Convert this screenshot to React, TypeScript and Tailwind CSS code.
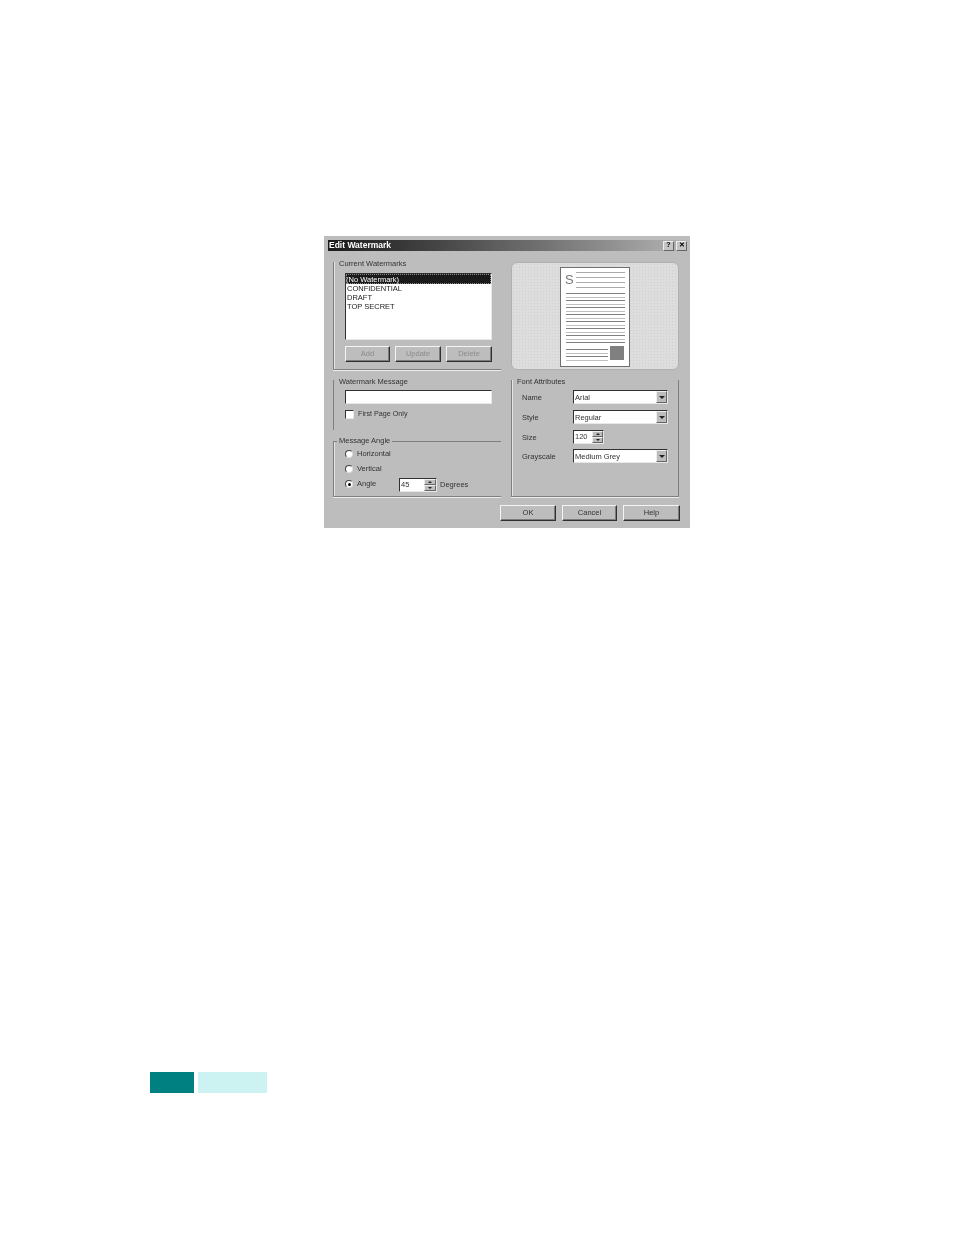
import React from 'react';

const raised =
  'border border-t-[#f4f4f4] border-l-[#f4f4f4] border-r-[#303030] border-b-[#303030] shadow-[inset_-1px_-1px_0_#7c7c7c]';
const raisedSmall = 'border border-t-[#eee] border-l-[#eee] border-r-[#666] border-b-[#666]';
const sunken =
  'border border-t-[#303030] border-l-[#303030] border-r-[#e8e8e8] border-b-[#e8e8e8] bg-white';

const Group: React.FC<{
  label: string;
  className: string;
  top?: boolean;
  right?: boolean;
  children?: React.ReactNode;
}> = ({ label, className, top, right, children }) => (
  <div
    className={`relative border-l border-b border-[#7f7f7f] shadow-[inset_1px_0_0_#e4e4e4,0_1px_0_#ececec] ${top ? 'border-t' : ''} ${right ? 'border-r' : ''} ${className}`}
  >
    <span
      className={`absolute left-[3px] bg-[#bdbdbd] px-[2px] text-[7.5px] leading-[10px] text-[#333] ${top ? 'top-[-6px]' : 'top-[-3px]'}`}
    >
      {label}
    </span>
    {children}
  </div>
);

const PushButton: React.FC<{ label: string; width: string; disabled?: boolean }> = ({
  label,
  width,
  disabled,
}) => (
  <div
    className={`flex items-center justify-center h-[16px] bg-[#bdbdbd] text-[7.5px] ${raised} ${width} ${disabled ? 'text-[#8c8c8c]' : 'text-[#333]'}`}
  >
    {label}
  </div>
);

const Radio: React.FC<{ label: string; checked?: boolean }> = ({ label, checked }) => (
  <div className="flex items-center h-[10px]">
    <div className="flex items-center justify-center w-[8px] h-[8px] rounded-full bg-white border border-t-[#444] border-l-[#444] border-r-[#ddd] border-b-[#ddd]">
      {checked && <div className="w-[3px] h-[3px] rounded-full bg-black" />}
    </div>
    <span className="ml-[4px] text-[7.5px] text-[#333]">{label}</span>
  </div>
);

const Spinner: React.FC<{ value: string; width: string; textWidth: string }> = ({
  value,
  width,
  textWidth,
}) => (
  <div className={`flex h-[14px] ${sunken} ${width}`}>
    <span className={`pl-[1px] text-[7.5px] leading-[12px] text-[#333] ${textWidth}`}>{value}</span>
    <div className="flex flex-col flex-1 bg-[#bdbdbd]">
      <div className={`flex-1 flex items-center justify-center ${raisedSmall}`}>
        <div className="w-0 h-0 border-x-[2px] border-x-transparent border-b-[2px] border-b-[#222]" />
      </div>
      <div className={`flex-1 flex items-center justify-center ${raisedSmall}`}>
        <div className="w-0 h-0 border-x-[2px] border-x-transparent border-t-[2px] border-t-[#222]" />
      </div>
    </div>
  </div>
);

const Field: React.FC<{ label: string; className?: string; children: React.ReactNode }> = ({
  label,
  className,
  children,
}) => (
  <div className={`flex items-center h-[14px] ${className ?? ''}`}>
    <span className="w-[51px] pt-[1px] text-[7.5px] text-[#333]">{label}</span>
    {children}
  </div>
);

const Select: React.FC<{ value: string }> = ({ value }) => (
  <div className={`flex items-center justify-between w-[95px] h-[14px] ${sunken}`}>
    <span className="pl-[1px] pt-[1px] text-[7.5px] text-[#333]">{value}</span>
    <div className={`flex items-center justify-center w-[11px] h-[12px] bg-[#bdbdbd] ${raisedSmall}`}>
      <div className="w-0 h-0 border-x-[3px] border-x-transparent border-t-[3px] border-t-[#222]" />
    </div>
  </div>
);

const DocPreview: React.FC = () => (
  <svg width="70" height="100" viewBox="0 0 70 100">
    <rect x="0.5" y="0.5" width="69" height="99" fill="#fff" stroke="#707070" />
    <text x="5" y="17" fontSize="13" fontFamily="Liberation Sans, sans-serif" fill="#777">
      S
    </text>
    {[5, 10, 15, 20].map((y) => (
      <line key={y} x1="16" x2="65" y1={y + 0.5} y2={y + 0.5} stroke="#aaa" />
    ))}
    {[26, 33, 40, 47, 54, 61, 68, 75].map((y) => (
      <line key={y} x1="6" x2="65" y1={y + 0.5} y2={y + 0.5} stroke="#808080" />
    ))}
    {[30, 37, 44, 51, 58, 65, 72].map((y) => (
      <line key={y} x1="6" x2="65" y1={y + 0.5} y2={y + 0.5} stroke="#c0c0c0" />
    ))}
    {[82, 86, 89, 93].map((y, i) => (
      <line key={y} x1="6" x2="48" y1={y + 0.5} y2={y + 0.5} stroke={i % 2 ? '#c0c0c0' : '#808080'} />
    ))}
    <rect x="50" y="79" width="14" height="14" fill="#808080" />
  </svg>
);

const App: React.FC = () => {
  return (
    <div className="h-[1235px] overflow-hidden bg-white font-['Liberation_Sans',Arial,sans-serif]">
      {/* Edit Watermark dialog */}
      <div className="ml-[324px] pt-[236px]">
        <div className="w-[366px] h-[292px] bg-[#bdbdbd] pt-[4px] pl-[4px] blur-[0.4px]">
          <div className="flex items-center justify-between w-[359px] h-[11px] bg-gradient-to-r from-[#1c1c1c] to-[#b4b4b4]">
            <span className="pl-[1px] text-[8.5px] font-bold text-white">Edit Watermark</span>
            <div className="flex gap-[2px]">
              <div className={`flex items-center justify-center w-[11px] h-[10px] bg-[#c4c4c4] text-[7px] font-bold text-black ${raisedSmall}`}>
                ?
              </div>
              <div className={`flex items-center justify-center w-[11px] h-[10px] bg-[#c4c4c4] text-[7px] font-bold text-black ${raisedSmall}`}>
                ✕
              </div>
            </div>
          </div>

          <div className="flex gap-[10px] pl-[5px] pt-[11px]">
            {/* left column */}
            <div className="flex flex-col w-[168px]">
              <Group label="Current Watermarks" className="h-[108px] pl-[11px] pt-[11px]">
                <div className={`w-[147px] h-[67px] text-[7.5px] leading-[9px] text-[#222] ${sunken}`}>
                  <div className="h-[10px] leading-[11px] bg-[#1a1a1a] text-white outline-1 -outline-offset-1 outline-dotted outline-[#888]">
                    (No Watermark)
                  </div>
                  <div className="pl-[1px]">CONFIDENTIAL</div>
                  <div className="pl-[1px]">DRAFT</div>
                  <div className="pl-[1px]">TOP SECRET</div>
                </div>
                <div className="flex gap-[5px] mt-[6px]">
                  <PushButton label="Add" width="w-[45px]" disabled />
                  <PushButton label="Update" width="w-[46px]" disabled />
                  <PushButton label="Delete" width="w-[46px]" disabled />
                </div>
              </Group>

              <Group label="Watermark Message" className="mt-[10px] h-[50px] pl-[11px] pt-[10px] !border-b-0 !shadow-none">
                <div className={`w-[147px] h-[14px] ${sunken}`} />
                <div className="flex items-center mt-[5px]">
                  <div className="w-[9px] h-[9px] bg-white border border-t-[#303030] border-l-[#303030] border-r-[#e8e8e8] border-b-[#e8e8e8]" />
                  <span className="ml-[4px] text-[7.2px] text-[#333]">First Page Only</span>
                </div>
              </Group>

              <Group label="Message Angle" top className="mt-[11px] h-[56px] pl-[11px] pt-[7px]">
                <div className="flex flex-col gap-[5px]">
                  <Radio label="Horizontal" />
                  <Radio label="Vertical" />
                  <div className="flex items-center h-[10px]">
                    <div className="w-[54px]">
                      <Radio label="Angle" checked />
                    </div>
                    <div className="mt-[2px] flex items-center">
                      <Spinner value="45" width="w-[38px]" textWidth="w-[24px]" />
                      <span className="ml-[3px] text-[7.5px] text-[#333]">Degrees</span>
                    </div>
                  </div>
                </div>
              </Group>
            </div>

            {/* right column */}
            <div className="flex flex-col w-[168px]">
              <div className="flex justify-center w-[168px] h-[108px] pt-[4px] rounded-md border border-[#b0b0b0] bg-[#dddddd] bg-[radial-gradient(#d0d0d0_0.5px,transparent_0.6px)] bg-[length:3px_3px]">
                <DocPreview />
              </div>
              <Group label="Font Attributes" right className="mt-[10px] h-[117px] pl-[10px] pt-[10px]">
                <div className="flex flex-col gap-[5px] w-[147px]">
                  <Field label="Name">
                    <Select value="Arial" />
                  </Field>
                  <Field label="Style" className="mt-[1px]">
                    <Select value="Regular" />
                  </Field>
                  <Field label="Size" className="mt-[1px]">
                    <Spinner value="120" width="w-[31px]" textWidth="w-[18px]" />
                  </Field>
                  <Field label="Grayscale">
                    <Select value="Medium Grey" />
                  </Field>
                </div>
              </Group>
            </div>
          </div>

          <div className="flex justify-end gap-[6px] w-[352px] mt-[8px]">
            <PushButton label="OK" width="w-[56px]" />
            <PushButton label="Cancel" width="w-[55px]" />
            <PushButton label="Help" width="w-[57px]" />
          </div>
        </div>
      </div>

      {/* page tab */}
      <div className="flex gap-[4px] h-[21px] mt-[544px] ml-[150px]">
        <div className="w-[44px] bg-[#008080]" />
        <div className="w-[69px] bg-[#ccf2f2]" />
      </div>
    </div>
  );
};

export default App;
